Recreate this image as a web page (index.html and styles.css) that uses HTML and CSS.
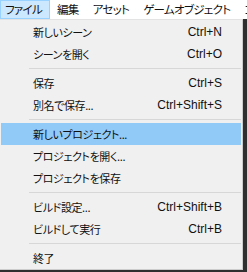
FILE: index.html
```html
<!DOCTYPE html>
<html lang="ja">
<head>
  <meta charset="UTF-8" />
  <title>ファイル メニュー</title>
  <link rel="stylesheet" href="styles.css">
</head>
<body>

  <!-- Menu bar -->
  <div class="menubar">
    <span class="top-item active">ファイル</span>
    <span class="top-item">編集</span>
    <span class="top-item">アセット</span>
    <span class="top-item">ゲームオブジェクト</span>
    <span class="top-item">コンポーネント</span>
  </div>

  <div class="workspace">
    <!-- File dropdown -->
    <div class="dropdown">
      <div class="item"><span class="label">新しいシーン</span><span class="key">Ctrl+N</span></div>
      <div class="item"><span class="label">シーンを開く</span><span class="key">Ctrl+O</span></div>
      <div class="sep"></div>
      <div class="item"><span class="label">保存</span><span class="key">Ctrl+S</span></div>
      <div class="item"><span class="label">別名で保存...</span><span class="key">Ctrl+Shift+S</span></div>
      <div class="sep"></div>
      <div class="item hover"><span class="label">新しいプロジェクト...</span></div>
      <div class="item"><span class="label">プロジェクトを開く...</span></div>
      <div class="item"><span class="label">プロジェクトを保存</span></div>
      <div class="sep"></div>
      <div class="item"><span class="label">ビルド設定...</span><span class="key">Ctrl+Shift+B</span></div>
      <div class="item"><span class="label">ビルドして実行</span><span class="key">Ctrl+B</span></div>
      <div class="sep"></div>
      <div class="item"><span class="label">終了</span></div>
    </div>
  </div>

</body>
</html>
```

FILE: styles.css
```css
* {
  box-sizing: border-box;
  margin: 0;
  padding: 0;
}

body {
  width: 247px;
  height: 272px;
  overflow: hidden;
  background: #2f2f2f;
  font-family: "Noto Sans CJK JP", sans-serif;
  font-feature-settings: "palt";
  font-size: 11px;
  letter-spacing: -0.4px;
  color: #111;
}

.menubar {
  display: flex;
  height: 19px;
  background: #ffffff;
  white-space: nowrap;
  overflow: hidden;
  font-size: 11.5px;
  letter-spacing: -0.7px;
}

.top-item {
  padding: 0 6px;
  line-height: 17px;
  border: 1px solid transparent;
}

.top-item.active {
  background: #cce8ff;
  border-color: #99d1ff;
  padding: 0 7px 0 4px;
}

.workspace {
  height: 253px;
}

.dropdown {
  width: 243px;
  background: #f0f0f0;
  border-top: 1px solid #e3e3e3;
  border-right: 1px solid #cccccc;
  border-bottom: 1px solid #cccccc;
  padding: 1px 1px 0 1px;
}

.item {
  display: flex;
  justify-content: space-between;
  align-items: center;
  height: 22px;
  padding: 0 19px 0 32px;
}

.item.hover {
  background: #91c9f7;
}

.key {
  font-family: "Liberation Sans", sans-serif;
  font-size: 12px;
  letter-spacing: 0;
}

.sep {
  height: 1px;
  background: #d7d7d7;
  margin: 3px 0 3px 28px;
}
```
